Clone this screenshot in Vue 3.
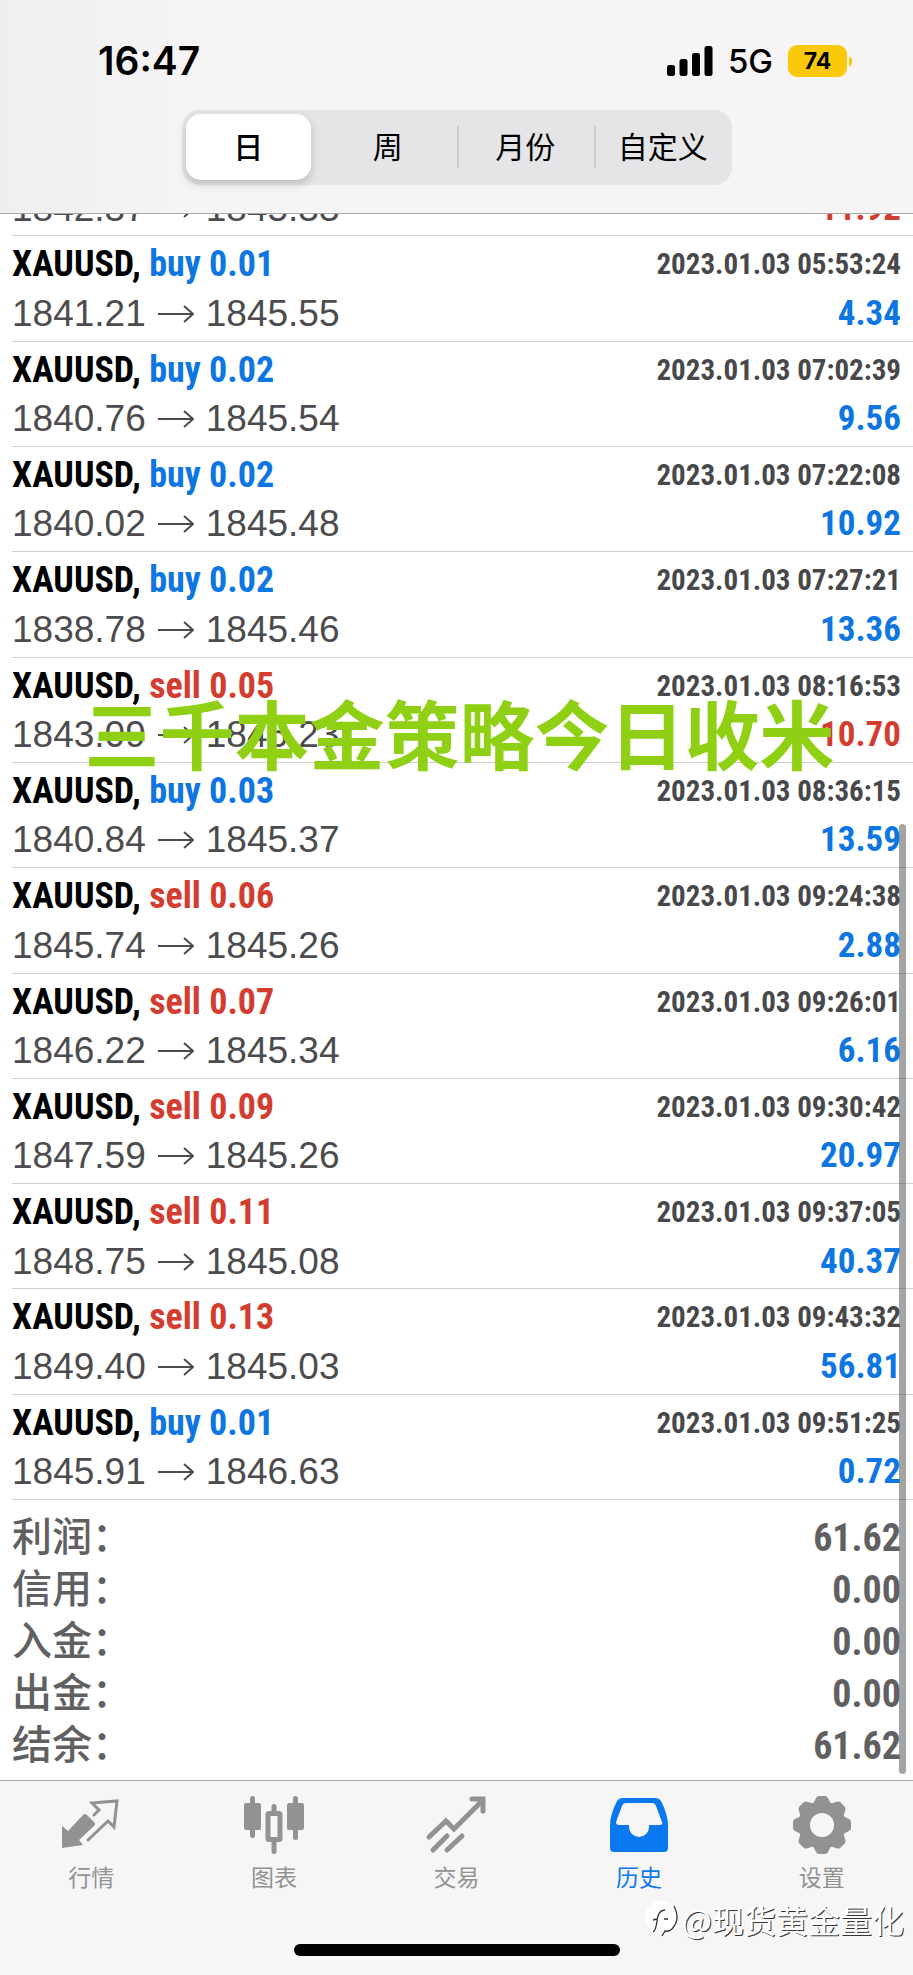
<script setup>
const ranges = [
  { label: '日', on: true },
  { label: '周', on: false },
  { label: '月份', on: false },
  { label: '自定义', on: false },
]
const deals = [
  ['sell', '0.05', '1842.37', '1845.33', '2023.01.03 05:40:11', '-11.92'],
  ['buy', '0.01', '1841.21', '1845.55', '2023.01.03 05:53:24', '4.34'],
  ['buy', '0.02', '1840.76', '1845.54', '2023.01.03 07:02:39', '9.56'],
  ['buy', '0.02', '1840.02', '1845.48', '2023.01.03 07:22:08', '10.92'],
  ['buy', '0.02', '1838.78', '1845.46', '2023.01.03 07:27:21', '13.36'],
  ['sell', '0.05', '1843.09', '1845.23', '2023.01.03 08:16:53', '-10.70'],
  ['buy', '0.03', '1840.84', '1845.37', '2023.01.03 08:36:15', '13.59'],
  ['sell', '0.06', '1845.74', '1845.26', '2023.01.03 09:24:38', '2.88'],
  ['sell', '0.07', '1846.22', '1845.34', '2023.01.03 09:26:01', '6.16'],
  ['sell', '0.09', '1847.59', '1845.26', '2023.01.03 09:30:42', '20.97'],
  ['sell', '0.11', '1848.75', '1845.08', '2023.01.03 09:37:05', '40.37'],
  ['sell', '0.13', '1849.40', '1845.03', '2023.01.03 09:43:32', '56.81'],
  ['buy', '0.01', '1845.91', '1846.63', '2023.01.03 09:51:25', '0.72'],
].map(([side, lots, open, close, time, profit]) => ({ side, lots, open, close, time, profit }))
const totals = [
  ['利润：', '61.62'],
  ['信用：', '0.00'],
  ['入金：', '0.00'],
  ['出金：', '0.00'],
  ['结余：', '61.62'],
]
</script>

<template>
  <div class="screen">
    <header class="top">
      <div class="status">
        <span class="clock">16:47</span>
        <div class="signals">
          <svg width="46" height="30" viewBox="0 0 46 30" aria-hidden="true">
            <rect x="0" y="19" width="8" height="11" rx="2.5" />
            <rect x="12.5" y="13" width="8" height="17" rx="2.5" />
            <rect x="25" y="7" width="8" height="23" rx="2.5" />
            <rect x="37.5" y="0" width="8" height="30" rx="2.5" />
          </svg>
          <span class="net">5G</span>
          <span class="battery">74</span>
        </div>
      </div>
      <nav class="segments">
        <button v-for="r in ranges" :key="r.label" type="button" :class="['segment', { on: r.on }]">{{ r.label }}</button>
      </nav>
    </header>

    <main class="history">
      <ul class="deals">
        <li v-for="d in deals" :key="d.time" class="deal">
          <div class="line">
            <span class="symbol">XAUUSD, <span :class="d.side">{{ d.side }} {{ d.lots }}</span></span>
            <time class="time">{{ d.time }}</time>
          </div>
          <div class="line second">
            <span class="prices">{{ d.open }}<svg class="arrow" width="36" height="18" viewBox="0 0 36 18" aria-label="→"><path d="M0 9H34M26 1L35 9L26 17" /></svg>{{ d.close }}</span>
            <span :class="['profit', d.profit.startsWith('-') ? 'sell' : 'buy']">{{ d.profit }}</span>
          </div>
        </li>
      </ul>
      <dl class="totals">
        <div v-for="[k, v] in totals" :key="k" class="total">
          <dt>{{ k }}</dt>
          <dd>{{ v }}</dd>
        </div>
      </dl>
      <p class="caption">三千本金策略今日收米</p>
      <div class="scrollbar"></div>
    </main>

    <footer class="bottom">
      <nav class="tabs">
        <a class="tab" href="#quotes">
          <svg width="60" height="60" viewBox="0 0 60 60" aria-hidden="true">
            <path d="M1 29L7 34L22 18Q24 16 26 18L33 25Q35 27 33 29L18 43L22 48L1 51Z" fill="currentColor" />
            <path d="M33 18L38 13L31 6L56 4L53 30L47 24L27 43" fill="none" stroke="currentColor" stroke-width="3" stroke-linecap="round" />
          </svg>
          行情
        </a>
        <a class="tab" href="#charts">
          <svg width="60" height="60" viewBox="0 0 60 60" aria-hidden="true">
            <g fill="currentColor">
              <rect x="6" y="-1" width="5" height="42" rx="2.5" /><rect x="0" y="6" width="17" height="27" rx="2" />
              <rect x="49" y="-1" width="5" height="44" rx="2.5" /><rect x="43" y="6" width="17" height="27" rx="2" />
              <rect x="27.5" y="7" width="5" height="10" rx="2.5" /><rect x="27.5" y="43" width="5" height="14" rx="2.5" />
            </g>
            <rect x="24" y="16.5" width="12" height="26" rx="1" fill="none" stroke="currentColor" stroke-width="5" />
          </svg>
          图表
        </a>
        <a class="tab" href="#trade">
          <svg width="60" height="60" viewBox="0 0 60 60" aria-hidden="true">
            <path d="M3 40L20 24L28 32L56 4M46 2H57V14M7 53L21 39M21 53L36 39" fill="none" stroke="currentColor" stroke-width="5" stroke-linecap="round" />
          </svg>
          交易
        </a>
        <a class="tab current" href="#history">
          <svg width="60" height="60" viewBox="0 0 60 60" aria-hidden="true">
            <path fill-rule="evenodd" fill="currentColor" d="M13 1H46Q50 1 52 4Q59 18 59 28V51Q59 55 55 55H5Q1 55 1 51V28Q1 18 8 4Q10 1 13 1ZM17 6Q14 6 13 9L7 25Q7 28 10 28H20V30A10 10 0 0 0 40 30V28H51Q54 28 53 25L47 9Q46 6 43 6Z" />
          </svg>
          历史
        </a>
        <a class="tab" href="#settings">
          <svg width="60" height="60" viewBox="0 0 60 60" aria-hidden="true">
            <circle cx="30" cy="28" r="17.5" fill="none" stroke="currentColor" stroke-width="11" />
            <g fill="currentColor">
              <path v-for="a in 8" :key="a" :transform="`rotate(${a * 45} 30 28)`" d="M20 7Q22 6 23 3L24 1Q25 -1 27 -1H33Q35 -1 36 1L37 3Q38 6 40 7L38 12H22Z" />
            </g>
          </svg>
          设置
        </a>
      </nav>
      <div class="home"></div>
      <div class="credit">
        <svg width="34" height="36" viewBox="0 0 34 36" aria-hidden="true">
          <circle cx="16" cy="16" r="16" fill="#fff" />
          <path d="M8 19L12 18M8 31Q11 29 12 20Q13 9 20 9M19 18H23M29 5Q36 18 27 28Q24 31 20 30L17 35" fill="none" stroke="#333" stroke-width="1.3" />
        </svg>
        <span>@现货黄金量化</span>
      </div>
    </footer>
  </div>
</template>

<style>
body {
  margin: 0;
  background: #fff;
}
</style>

<style scoped>
.screen {
  min-height: 100vh;
  display: flex;
  flex-direction: column;
  overflow: hidden;
  background: #fff;
  font-family: "Liberation Sans", "Noto Sans CJK SC", sans-serif;
}
.top {
  position: relative;
  z-index: 1;
  background: linear-gradient(90deg, #efeff0, #f7f4f4 25%, #f5f5f5 60%, #f7f4f4);
  border-bottom: 1px solid #a8a8aa;
  padding: 38px 0 28px;
}
.status {
  display: flex;
  justify-content: space-between;
  align-items: center;
  height: 46px;
  padding: 0 66px 0 98px;
}
.clock {
  font: 600 39px/46px Inter, sans-serif;
}
.signals {
  display: flex;
  align-items: center;
  gap: 15px;
}
.net {
  font: 500 33px/40px Inter, sans-serif;
}
.battery {
  position: relative;
  width: 59px;
  height: 32px;
  border-radius: 9px;
  background: #fbc90b;
  font: 700 23px/32px Inter, sans-serif;
  text-align: center;
}
.battery::after {
  content: "";
  position: absolute;
  left: 61px;
  top: 12px;
  width: 3px;
  height: 9px;
  border-radius: 0 4px 4px 0;
  background: #fbc90b;
}
.segments {
  display: grid;
  grid-template-columns: repeat(4, 1fr);
  max-width: 550px;
  margin: 26px auto 0;
  padding: 4px 0 5px;
  border-radius: 18px;
  background: #e5e5e7;
}
.segment {
  position: relative;
  box-sizing: border-box;
  height: 66px;
  margin: 0 4px;
  padding: 0 0 4px;
  border: 0;
  background: none;
  color: #000;
  font: 400 30px/62px "Noto Sans CJK SC", sans-serif;
  white-space: nowrap;
}
.segment.on {
  margin-right: 8px;
  border-radius: 15px;
  background: #fff;
  box-shadow: 0 4px 10px rgba(0, 0, 0, 0.18);
  font-weight: 500;
}
.segment:nth-child(n + 3)::before {
  content: "";
  position: absolute;
  left: -4px;
  top: 12px;
  width: 2px;
  height: 42px;
  background: #cdcdd0;
}
.history {
  position: relative;
  flex: 1;
  display: flex;
  flex-direction: column;
}
.deals {
  flex: 1;
  display: flex;
  flex-direction: column;
  margin: -83px 0 0;
  padding: 0 0 0 12px;
  list-style: none;
}
.deal {
  flex: 1;
  border-bottom: 1px solid #cfcfd1;
  padding: 4px 12px 1px 0;
}
.line {
  display: flex;
  justify-content: space-between;
  align-items: center;
  height: 48px;
}
.line.second {
  height: 51px;
}
.symbol {
  font: 700 36px/48px "Roboto Condensed", "Liberation Sans", sans-serif;
}
.profit {
  font: 700 35px/48px "Roboto Condensed", "Liberation Sans", sans-serif;
}
.time {
  color: #48484a;
  font: 700 29px/48px "Roboto Condensed", "Liberation Sans", sans-serif;
}
.buy {
  color: #0d76e0;
}
.sell {
  color: #d23d30;
}
.prices {
  display: flex;
  align-items: center;
  gap: 12px;
  color: #4c4c4e;
  font-size: 37px;
}
.arrow path {
  fill: none;
  stroke: #4c4c4e;
  stroke-width: 2;
}
.totals {
  margin: 0;
  padding: 10px 12px;
  color: #606062;
}
.total {
  display: flex;
  justify-content: space-between;
  height: 52px;
}
dt {
  font: 500 40px/48px "Noto Sans CJK SC", sans-serif;
}
dd {
  margin: 0;
  font: 700 38px/56px "Roboto Condensed", "Liberation Sans", sans-serif;
}
.caption {
  position: absolute;
  top: 468px;
  left: 0;
  right: 0;
  margin: 0;
  padding-left: 6px;
  text-align: center;
  color: #8fd014;
  font: 700 75px/100px "Noto Sans CJK SC", sans-serif;
  white-space: nowrap;
}
.scrollbar {
  position: absolute;
  right: 7px;
  top: 610px;
  bottom: 6px;
  width: 7px;
  border-radius: 4px;
  background: rgba(90, 90, 90, 0.55);
}
.bottom {
  position: relative;
  height: 194px;
  border-top: 1px solid #a8a8aa;
  background: #f6f6f6;
}
.tabs {
  display: grid;
  grid-template-columns: repeat(5, 1fr);
}
.tab {
  display: flex;
  flex-direction: column;
  align-items: center;
  padding-top: 16px;
  color: #929292;
  text-decoration: none;
  font: 400 23px/38px "Noto Sans CJK SC", sans-serif;
}
.tab svg {
  overflow: visible;
}
.tab.current {
  color: #0a78f0;
}
.home {
  position: absolute;
  left: 50%;
  bottom: 19px;
  width: 326px;
  height: 12px;
  margin-left: -163px;
  border-radius: 6px;
  background: #000;
}
.credit {
  position: absolute;
  right: 9px;
  bottom: 34px;
  display: flex;
  align-items: center;
  gap: 3px;
  color: #fff;
  font: 400 32px/44px "Noto Sans CJK SC", sans-serif;
  text-shadow: 1px 1px 0 #333;
}
</style>
